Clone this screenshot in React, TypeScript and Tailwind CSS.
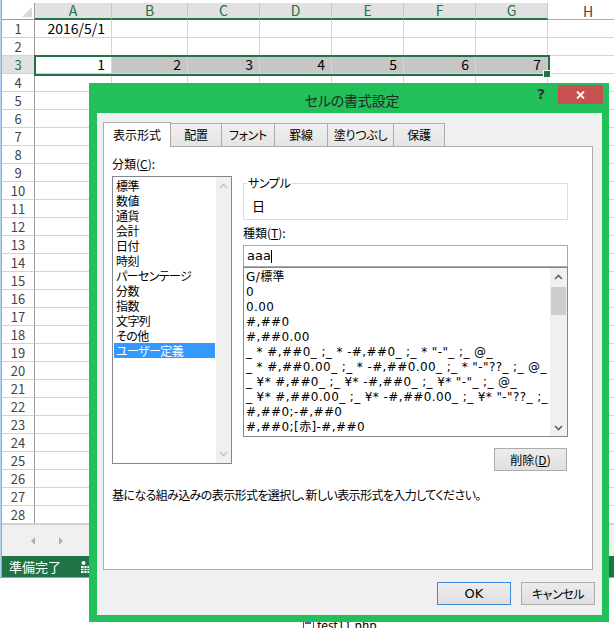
import React from 'react';

const cols = [
  { l: 'A', w: 'w-[77px]' },
  { l: 'B', w: 'w-[76px]' },
  { l: 'C', w: 'w-[72px]' },
  { l: 'D', w: 'w-[72px]' },
  { l: 'E', w: 'w-[72px]' },
  { l: 'F', w: 'w-[72px]' },
  { l: 'G', w: 'w-[72px]' },
  { l: 'H', w: 'w-[80px]' },
];

const categories = ['標準', '数値', '通貨', '会計', '日付', '時刻', 'パーセンテージ', '分数', '指数', '文字列', 'その他', 'ユーザー定義'];

const formats = [
  'G/標準',
  '0',
  '0.00',
  '#,##0',
  '#,##0.00',
  '_ * #,##0_ ;_ * -#,##0_ ;_ * "-"_ ;_ @_',
  '_ * #,##0.00_ ;_ * -#,##0.00_ ;_ * "-"??_ ;_ @_',
  '_ ¥* #,##0_ ;_ ¥* -#,##0_ ;_ ¥* "-"_ ;_ @_',
  '_ ¥* #,##0.00_ ;_ ¥* -#,##0.00_ ;_ ¥* "-"??_ ;_ @_',
  '#,##0;-#,##0',
  '#,##0;[赤]-#,##0',
];

const tabs = [
  { t: '配置', w: 'w-[52px]' },
  { t: 'フォント', w: 'w-[54px]' },
  { t: '罫線', w: 'w-[54px]' },
  { t: '塗りつぶし', w: 'w-[67px]' },
  { t: '保護', w: 'w-[52px]' },
];

function Chevron({ up, color }: { up: boolean; color: string }) {
  return (
    <svg width="9" height="6" viewBox="0 0 9 6">
      <path
        d={up ? 'M1 5 L4.5 1.5 L8 5' : 'M1 1 L4.5 4.5 L8 1'}
        fill="none"
        stroke={color}
        strokeWidth="1.6"
      />
    </svg>
  );
}

function Sheet() {
  const rows = Array.from({ length: 28 }, (_, i) => i + 1);
  return (
    <div className="relative w-[614px] h-[578px] border-b border-[#a0a0a0] flex">
      <div className="w-[2px] h-full shrink-0 bg-[#b3d3ee] border-r border-[#a8a8a8]" />
      <div className="flex flex-col flex-1 overflow-hidden">
        {/* column header */}
        <div className="flex h-[17px] mt-[3px] shrink-0">
          <div className="w-[33px] shrink-0 border-r border-b border-[#9b9b9b] bg-white relative flex items-end justify-end pr-[2px] pb-[2px]">
            <svg width="10" height="10" viewBox="0 0 10 10">
              <path d="M10 0 L10 10 L0 10 Z" fill="#dadada" />
            </svg>
          </div>
          {cols.map((c, i) =>
            i < 7 ? (
              <div
                key={c.l}
                className={`${c.w} shrink-0 bg-[#e1e1e1] border-r border-[#c6c6c6] border-b-2 border-b-[#217346] flex items-center justify-center text-[14px] leading-[15px] text-[#217346]`}
              >
                {c.l}
              </div>
            ) : (
              <div
                key={c.l}
                className={`${c.w} shrink-0 bg-white border-b border-[#ababab] flex items-center justify-center text-[14px] leading-[16px] text-[#444444]`}
              >
                {c.l}
              </div>
            )
          )}
        </div>
        {rows.map((r) => (
          <div key={r} className="flex h-[18px] shrink-0">
            <div
              className={`w-[33px] shrink-0 border-r border-b border-r-[#9b9b9b] border-b-[#d4d4d4] flex items-center justify-center text-[13px] leading-[17px] ${
                r === 3 ? 'bg-[#e1e1e1] text-[#217346]' : 'bg-white text-[#444444]'
              }`}
            >
              {r}
            </div>
            {cols.map((c, ci) => (
              <div
                key={c.l}
                className={`${c.w} shrink-0 border-r border-b border-[#d4d4d4] flex items-center justify-end pr-[6px] text-[14px] leading-[17px] text-black ${
                  r === 3 && ci > 0 && ci < 7 ? 'bg-[#c6c6c6]' : 'bg-white'
                }`}
              >
                {r === 1 && ci === 0 ? '2016/5/1' : r === 3 && ci < 7 ? String(ci + 1) : ''}
              </div>
            ))}
          </div>
        ))}
        {/* horizontal scroll area */}
        <div className="h-[32px] shrink-0 bg-[#f0f0f0] border-t border-[#d0d0d0] flex items-center">
          <div className="ml-[29px] w-0 h-0 border-y-[4px] border-y-transparent border-r-[4px] border-r-[#b0b0b0]" />
          <div className="ml-[24px] w-0 h-0 border-y-[4px] border-y-transparent border-l-[4px] border-l-[#b0b0b0]" />
        </div>
        {/* status bar */}
        <div className="h-[21px] shrink-0 bg-[#217346] flex items-center">
          <span className="ml-[7px] text-[13px] leading-[16px] text-white [font-feature-settings:'palt']">準備完了</span>
          <svg className="ml-[20px]" width="12" height="12" viewBox="0 0 12 12">
            <circle cx="2.5" cy="2" r="2" fill="#ffffff" />
            <rect x="0" y="5" width="12" height="7" fill="#ffffff" />
            <path d="M0 7.5 H12 M0 9.5 H12 M3 5 V12 M6 5 V12 M9 5 V12" stroke="#217346" strokeWidth="0.8" />
          </svg>
        </div>
      </div>
      {/* selection outline */}
      <div className="absolute left-[34px] top-[55px] w-[516px] h-[21px] border-2 border-[#217346]" />
      <div className="absolute left-[543px] top-[70px] w-[8px] h-[8px] bg-[#217346] border border-white" />
    </div>
  );
}

function Dialog() {
  return (
    <div className="absolute left-[89px] top-[83px] w-[520px] h-[539px] bg-[#21c05b] flex flex-col [font-feature-settings:'palt']">
      <div className="relative h-[30px] shrink-0 flex items-center justify-center">
        <span className="text-[14px] leading-[18px] tracking-[-0.2px] text-[#262626] mt-[4px] ml-[6px]">セルの書式設定</span>
        <span className="absolute left-[448px] top-[2px] text-[14px] leading-[18px] font-bold text-[#333333] font-['DejaVu_Sans',sans-serif]">?</span>
        <div className="absolute left-[469px] top-[2px] w-[45px] h-[19px] bg-[#c75050] flex items-center justify-center">
          <svg width="9" height="8" viewBox="0 0 9 8">
            <path d="M1 0.5 L8 7.5 M8 0.5 L1 7.5" stroke="#ffffff" strokeWidth="1.8" />
          </svg>
        </div>
      </div>
      <div className="ml-[8px] mr-[7px] h-[502px] bg-[#f0f0f0] flex flex-col pt-[9px] pl-[6px]">
        {/* tabs */}
        <div className="flex items-start h-[24px] shrink-0">
          <div className="relative z-10 w-[68px] h-[25px] bg-white border border-b-0 border-[#acacac] flex items-center justify-center text-[12px] leading-[14px] text-black">
            表示形式
          </div>
          {tabs.map((t) => (
            <div
              key={t.t}
              className={`${t.w} mt-[1px] h-[23px] -ml-px bg-linear-to-b from-[#f0f0f0] to-[#e5e5e5] border border-b-0 border-[#acacac] flex items-center justify-center text-[12px] leading-[14px] tracking-[-0.3px] text-black`}
            >
              {t.t}
            </div>
          ))}
        </div>
        {/* panel */}
        <div className="w-[490px] h-[424px] shrink-0 border border-[#acacac] bg-white flex flex-col pl-[8px] text-[12px] text-black">
          <div className="flex gap-[11px]">
            {/* left column */}
            <div className="w-[120px] flex flex-col">
              <div className="mt-[9px] h-[16px] leading-[16px]">
                分類(<span className="underline">C</span>):
              </div>
              <div className="mt-[4px] h-[288px] border border-[#828790] flex">
                <div className="w-[103px] pt-[1px] px-[1px] flex flex-col">
                  {categories.map((c, i) => (
                    <div
                      key={c}
                      className={`h-[15px] leading-[15px] pl-[2px] whitespace-nowrap tracking-[-0.6px] overflow-hidden ${
                        i === categories.length - 1 ? 'bg-[#3399ff] text-white' : 'text-black'
                      }`}
                    >
                      {c}
                    </div>
                  ))}
                </div>
                <div className="flex-1 bg-[#f0f0f0] flex flex-col items-center justify-between py-[6px]">
                  <Chevron up color="#c4c4c4" />
                  <Chevron up={false} color="#c4c4c4" />
                </div>
              </div>
            </div>
            {/* right column */}
            <div className="w-[325px] flex flex-col pt-[36px]">
              <div className="relative h-[37px] border border-[#dcdcdc] pt-[14px] pl-[8px]">
                <span className="absolute left-[3px] top-[-8px] bg-white px-[1px] leading-[14px] tracking-[-0.4px]">サンプル</span>
                <div className="text-[13px] leading-[16px]">日</div>
              </div>
              <div className="mt-[6px] leading-[14px]">
                種類(<span className="underline">T</span>):
              </div>
              <div className="mt-[5px] h-[22px] border border-[#a9a9a9] flex items-center pl-[3px]">
                <span className="text-[13px] leading-[16px] font-['DejaVu_Sans',sans-serif]">aaa</span>
                <span className="w-px h-[13px] bg-black" />
              </div>
              <div className="h-[170px] border border-[#828790] flex">
                <div className="flex-1 overflow-hidden pt-[2px] pl-[2px] flex flex-col font-['DejaVu_Sans','Noto_Sans_CJK_JP',sans-serif]">
                  {formats.map((f) => (
                    <div key={f} className="h-[15px] leading-[15px] whitespace-pre text-[12px] tracking-[0.4px]">
                      {f}
                    </div>
                  ))}
                </div>
                <div className="w-[17px] bg-[#f0f0f0] flex flex-col">
                  <div className="h-[17px] flex items-center justify-center">
                    <Chevron up color="#606060" />
                  </div>
                  <div className="mt-[2px] mx-[1px] h-[28px] bg-[#cdcdcd]" />
                  <div className="flex-1" />
                  <div className="h-[17px] flex items-center justify-center">
                    <Chevron up={false} color="#606060" />
                  </div>
                </div>
              </div>
              <div className="mt-[11px] self-end mr-[1px] w-[73px] h-[23px] border border-[#acacac] bg-linear-to-b from-[#ececec] to-[#e0e0e0] flex items-center justify-center leading-[14px]">
                削除(<span className="underline">D</span>)
              </div>
            </div>
          </div>
          <div className="mt-[16px] leading-[16px] whitespace-nowrap tracking-[-0.6px]">
            基になる組み込みの表示形式を選択し、新しい表示形式を入力してください。
          </div>
        </div>
        {/* buttons */}
        <div className="mt-[12px] flex justify-end gap-[10px] pr-[7px]">
          <div className="w-[74px] h-[23px] border border-[#3c8ad8] bg-linear-to-b from-[#ececec] to-[#e0e0e0] flex items-center justify-center text-[13px] leading-[14px] text-black font-['DejaVu_Sans',sans-serif]">
            OK
          </div>
          <div className="w-[74px] h-[23px] border border-[#acacac] bg-linear-to-b from-[#ececec] to-[#e0e0e0] flex items-center justify-center text-[12px] leading-[14px] tracking-[-0.4px] text-black">
            キャンセル
          </div>
        </div>
      </div>
    </div>
  );
}

export default function App() {
  return (
    <div className="relative w-[614px] h-[628px] overflow-hidden bg-white font-['Noto_Sans_CJK_JP','Noto_Sans',sans-serif]">
      <Sheet />
      <div className="mt-[40px] pl-[303px] flex items-center gap-[3px]">
        <svg width="11" height="12" viewBox="0 0 11 12">
          <rect x="0.5" y="0.5" width="10" height="11" fill="#ffffff" stroke="#555555" />
          <rect x="2" y="2" width="3" height="3" fill="#cc3333" />
          <rect x="5" y="2" width="3" height="3" fill="#3366cc" />
        </svg>
        <span className="text-[12px] leading-[14px] text-black">test11.php</span>
      </div>
      <Dialog />
    </div>
  );
}
